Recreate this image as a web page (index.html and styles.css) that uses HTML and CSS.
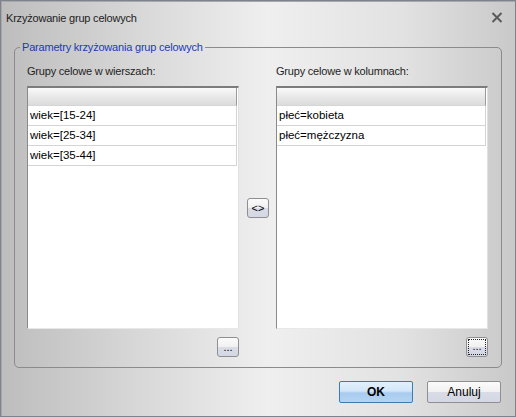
FILE: index.html
```html
<!DOCTYPE html>
<html lang="pl">
<head>
<meta charset="utf-8">
<title>Krzyżowanie grup celowych</title>
<link rel="stylesheet" href="styles.css">
</head>
<body>
<div class="window">
  <div class="titlebar">
    <span class="title">Krzyżowanie grup celowych</span>
    <svg class="close" width="12" height="11" viewBox="0 0 12 11"><path d="M1.5 1 L10.5 10 M10.5 1 L1.5 10" stroke="#5a5a5a" stroke-width="2" fill="none"/></svg>
  </div>
  <fieldset class="group">
    <legend class="legend">Parametry krzyżowania grup celowych</legend>
    <div class="grid">
      <div class="label">Grupy celowe w wierszach:</div>
      <div></div>
      <div class="label">Grupy celowe w kolumnach:</div>

      <div class="list">
        <div class="header"></div>
        <div class="row">wiek=[15-24]</div>
        <div class="row">wiek=[25-34]</div>
        <div class="row">wiek=[35-44]</div>
      </div>
      <div class="mid"><button class="btn small swap">&lt;&gt;</button></div>
      <div class="list">
        <div class="header"></div>
        <div class="row">płeć=kobieta</div>
        <div class="row">płeć=mężczyzna</div>
      </div>

      <div class="btncell"><button class="btn small dots">...</button></div>
      <div></div>
      <div class="btncell"><button class="btn small dots focus"><span class="focusring">...</span></button></div>
    </div>
  </fieldset>
  <div class="actions">
    <button class="btn action ok">OK</button>
    <button class="btn action">Anuluj</button>
  </div>
</div>
</body>
</html>
```
FILE: styles.css
```css
* { box-sizing: border-box; }
html, body { margin: 0; padding: 0; }
body { font-family: "Liberation Sans", Arial, sans-serif; font-size: 11px; letter-spacing: -0.2px; color: #000; }

.window {
  width: 516px;
  height: 417px;
  border: 1px solid #7d828c;
  box-shadow: inset 1px 1px 0 #a8a8a8;
  background: linear-gradient(90deg, #bdbdbd 0%, #d6d6d6 25%, #efefef 52%, #e2e2e2 78%, #c9c9c9 100%);
  display: flex;
  flex-direction: column;
}

.titlebar {
  height: 39px;
  padding: 10px 12px 0 5px;
  display: flex;
  justify-content: space-between;
  align-items: flex-start;
}
.title { line-height: 14px; color: #222; }
.close { margin-top: 1px; }

.group {
  margin: 0 13px;
  padding: 0;
  height: 328px;
  border: 1px solid #8b8b8b;
  border-radius: 5px;
  min-width: 0;
}
.legend {
  margin-left: 5px;
  padding: 0 2px;
  line-height: 14px;
  color: #1a3ab8;
}

.grid {
  padding: 10px 0 0 12px;
  display: grid;
  grid-template-columns: 212px 37px 212px;
  grid-template-rows: 14px 243px 21px;
  row-gap: 8px;
}
.label { line-height: 14px; color: #1e1e1e; }

.list {
  background: #fff;
  border: 1px solid #8a8a8a;
  border-top: 2px solid #7c7c7c;
  border-bottom-color: #e8e8e8;
  border-right-color: #e0e0e0;
  padding-right: 1px;
}
.header {
  height: 18px;
  background: linear-gradient(#f9f9f9, #e6e6e6 60%, #dcdcdc);
  border-right: 1px solid #9a9a9a;
  border-bottom: 1px solid #d5d5d5;
}
.row {
  height: 20px;
  line-height: 19px;
  padding-left: 2px;
  font-size: 11.5px;
  letter-spacing: 0;
  border-bottom: 1px solid #d4d4d4;
  border-right: 1px solid #d4d4d4;
}

.mid { display: flex; align-items: center; justify-content: center; }
.btncell { display: flex; justify-content: flex-end; }

.btn {
  font-family: inherit;
  font-size: 12px;
  letter-spacing: 0;
  color: #000;
  margin: 0;
  padding: 0;
  border: 1px solid #8f8f93;
  border-radius: 3px;
  background: linear-gradient(#fbfbfb 0%, #f1f1f1 48%, #d9dce6 52%, #d4d8e4 100%);
  display: flex;
  align-items: center;
  justify-content: center;
}
.small { width: 22px; height: 20px; font-size: 11px; }
.swap { margin-left: 1px; }
.dots { line-height: 10px; }
.focusring {
  display: block;
  width: 18px;
  height: 16px;
  border: 1px dotted #222;
  line-height: 12px;
  text-align: center;
}

.actions {
  display: flex;
  justify-content: flex-end;
  gap: 14px;
  padding: 13px 14px 0 0;
}
.action { width: 74px; height: 22px; border-radius: 2px; }
.ok {
  font-weight: bold;
  border-color: #3d7bad;
  background: linear-gradient(#e3f0fb 0%, #d3e6f8 45%, #a8cbef 55%, #b6d4f2 100%);
}
```
